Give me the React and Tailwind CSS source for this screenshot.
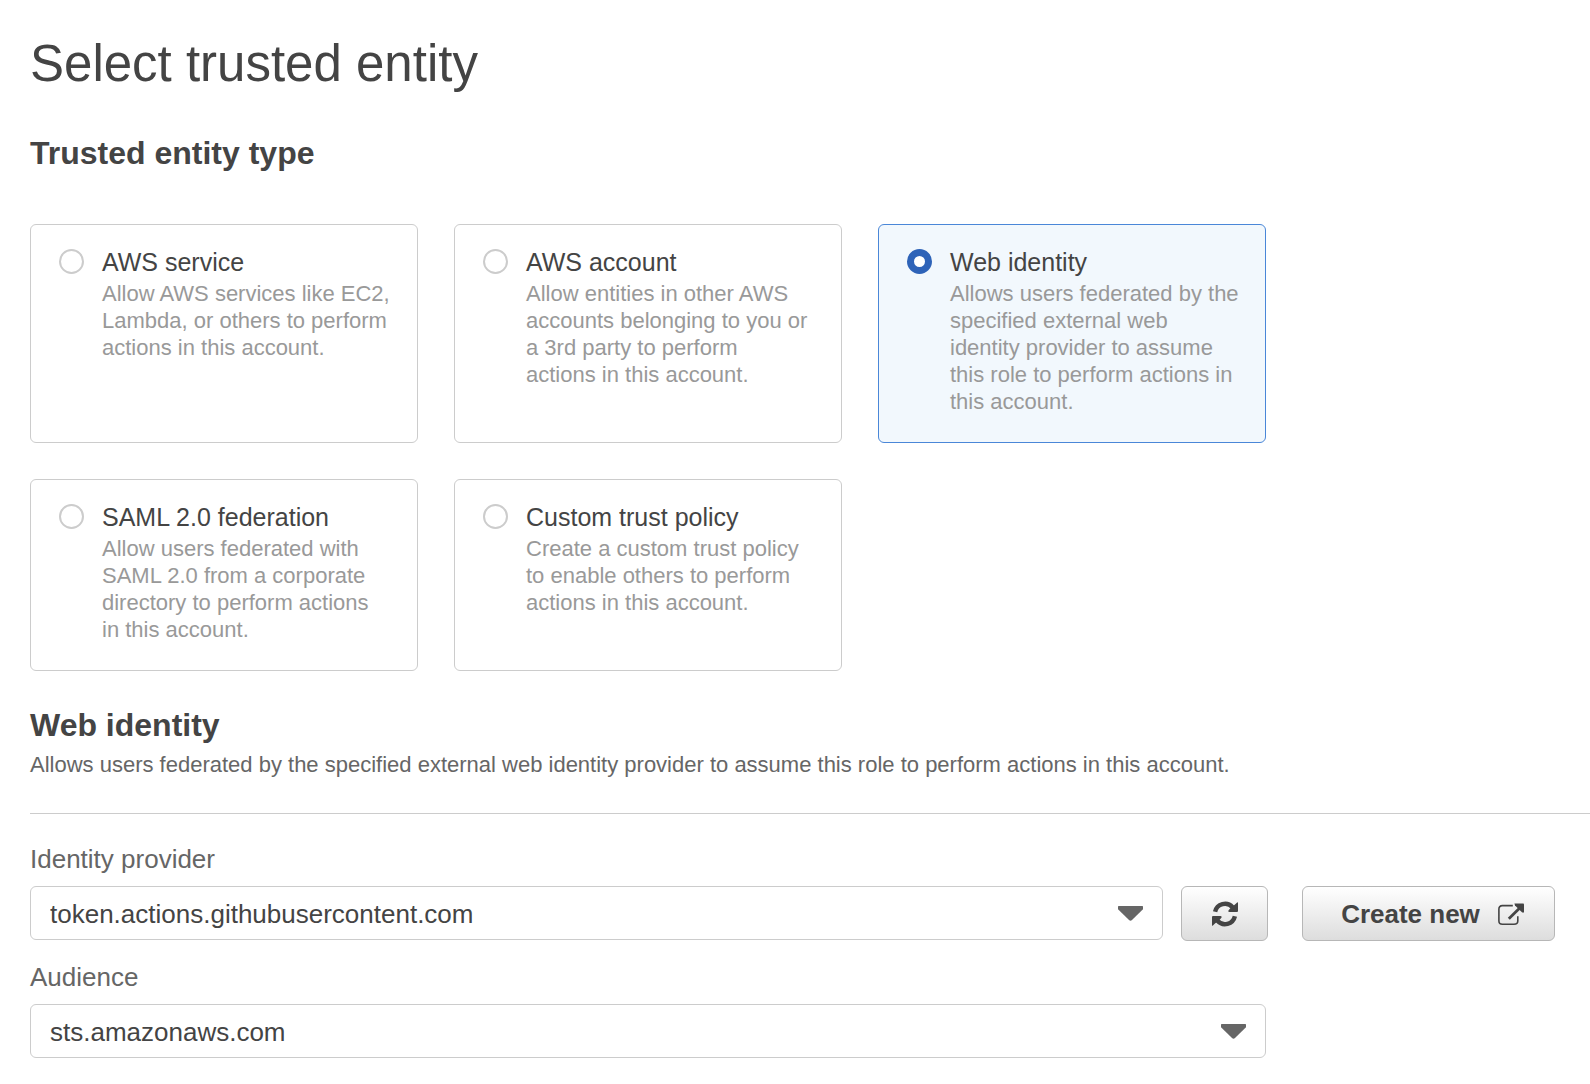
import { useState } from "react";

const ENTITY_TYPES = [
  {
    id: "aws-service",
    title: "AWS service",
    description:
      "Allow AWS services like EC2,\nLambda, or others to perform\nactions in this account.",
  },
  {
    id: "aws-account",
    title: "AWS account",
    description:
      "Allow entities in other AWS\naccounts belonging to you or\na 3rd party to perform\nactions in this account.",
  },
  {
    id: "web-identity",
    title: "Web identity",
    description:
      "Allows users federated by the\nspecified external web\nidentity provider to assume\nthis role to perform actions in\nthis account.",
  },
  {
    id: "saml",
    title: "SAML 2.0 federation",
    description:
      "Allow users federated with\nSAML 2.0 from a corporate\ndirectory to perform actions\nin this account.",
  },
  {
    id: "custom",
    title: "Custom trust policy",
    description:
      "Create a custom trust policy\nto enable others to perform\nactions in this account.",
  },
];

function EntityCard({ id, title, description, checked, onSelect }) {
  return (
    <label
      htmlFor={id}
      className={
        "flex cursor-pointer items-start gap-[18px] rounded-md border pt-[21px] pr-5 pb-[27px] pl-7 " +
        (checked ? "border-[#4a87d8] bg-[#f2f8fd]" : "border-[#cccccc] bg-white")
      }
    >
      <input
        id={id}
        type="radio"
        name="entity-type"
        checked={checked}
        onChange={() => onSelect(id)}
        className="mt-[3px] size-[25px] shrink-0 appearance-none rounded-full border-2 border-[#cccccc] bg-white checked:border-[7px] checked:border-[#2e63b8]"
      />
      <span className="block">
        <span className="block text-[25px] leading-8 text-[#444444]">{title}</span>
        <span className="mt-0.5 block text-[22px] leading-[27px] whitespace-pre-line text-[#999999]">
          {description}
        </span>
      </span>
    </label>
  );
}

function SelectBox({ id, option }) {
  return (
    <div className="relative">
      <select
        id={id}
        className="h-[54px] w-full appearance-none rounded-md border border-[#cccccc] bg-white pt-0.5 pr-16 pl-[19px] text-[26px] text-[#444444]"
      >
        <option>{option}</option>
      </select>
      <svg
        viewBox="0 0 25 15"
        className="pointer-events-none absolute top-5 right-5 h-[15px] w-[25px]"
        fill="#666666"
      >
        <path d="M0.6 0H24.4Q25 0 25 .6V3.2L14 14Q12.5 15.4 11 14L0 3.2V.6Q0 0 .6 0Z" />
      </svg>
    </div>
  );
}

function RefreshIcon() {
  return (
    <svg viewBox="0 0 26 26" className="size-[26px]" fill="none">
      <g id="refresh-arrow">
        <path
          d="M3.1 10.8A10.2 10.2 0 0 1 20.6 6.2"
          stroke="#444444"
          strokeWidth="4.4"
        />
        <path
          d="M25.4 1.2Q26 1.2 26 1.8V10Q26 11 25 11H17.4Q15.4 10.6 16.6 9.2L18.8 6.8L23 3.4Z"
          fill="#444444"
        />
      </g>
      <use href="#refresh-arrow" transform="rotate(180 13 13)" />
    </svg>
  );
}

function ExternalIcon() {
  return (
    <svg viewBox="0 0 26 23" className="h-[23px] w-[26px]" fill="none">
      <path
        d="M14.8 2.6H4.4Q.9 2.6 .9 6.1V18Q.9 21.3 4.4 21.3H16Q19.8 21.3 19.8 18V13.2"
        stroke="#444444"
        strokeWidth="1.6"
      />
      <path d="M10.8 15.8L22 4.8" stroke="#444444" strokeWidth="2.8" />
      <path d="M16.4 .6H25.2Q26 .6 26 1.4V9.6L24.2 9.4L17 2.6Z" fill="#444444" />
    </svg>
  );
}

export default function App() {
  const [selected, setSelected] = useState("web-identity");

  return (
    <main className="min-h-screen bg-white pt-[34px] pb-6 pl-[30px] font-['Liberation_Sans',Arial,sans-serif] text-[#444444]">
      <h1 className="text-[51px] leading-[60px]">Select trusted entity</h1>
      <h2 className="mt-[39px] text-[32px] leading-10 font-bold">Trusted entity type</h2>

      <div
        role="radiogroup"
        aria-label="Trusted entity type"
        className="mt-[51px] mr-[35px] grid max-w-[1236px] grid-cols-3 gap-9"
      >
        {ENTITY_TYPES.map((type) => (
          <EntityCard
            key={type.id}
            {...type}
            checked={selected === type.id}
            onSelect={setSelected}
          />
        ))}
      </div>

      <h2 className="mt-[34px] text-[32px] leading-10 font-bold">Web identity</h2>
      <p className="mt-1.5 border-b border-[#cccccc] pb-[35px] text-[22px] leading-[27px] text-[#666666]">
        Allows users federated by the specified external web identity provider to assume this role to
        perform actions in this account.
      </p>

      <form className="mt-[29px] mr-[35px]" onSubmit={(event) => event.preventDefault()}>
        <label htmlFor="provider" className="block text-[26px] leading-8 text-[#666666]">
          Identity provider
        </label>
        <div className="mt-[11px] flex items-start">
          <div className="flex-1">
            <SelectBox id="provider" option="token.actions.githubusercontent.com" />
          </div>
          <button
            type="button"
            aria-label="Refresh"
            className="ml-[18px] flex h-[55px] w-[87px] items-center justify-center rounded-md border border-[#b7b7b7] bg-linear-to-b from-white to-[#dddddd]"
          >
            <RefreshIcon />
          </button>
          <button
            type="button"
            className="ml-[34px] flex h-[55px] w-[253px] items-center justify-center gap-[18px] rounded-md border border-[#b7b7b7] bg-linear-to-b from-white to-[#dddddd] pt-0.5 pl-2 text-[26px] font-bold whitespace-nowrap"
          >
            Create new
            <ExternalIcon />
          </button>
        </div>
        <label htmlFor="audience" className="mt-5 block text-[26px] leading-8 text-[#666666]">
          Audience
        </label>
        <div className="mt-[11px] max-w-[1236px]">
          <SelectBox id="audience" option="sts.amazonaws.com" />
        </div>
      </form>
    </main>
  );
}
